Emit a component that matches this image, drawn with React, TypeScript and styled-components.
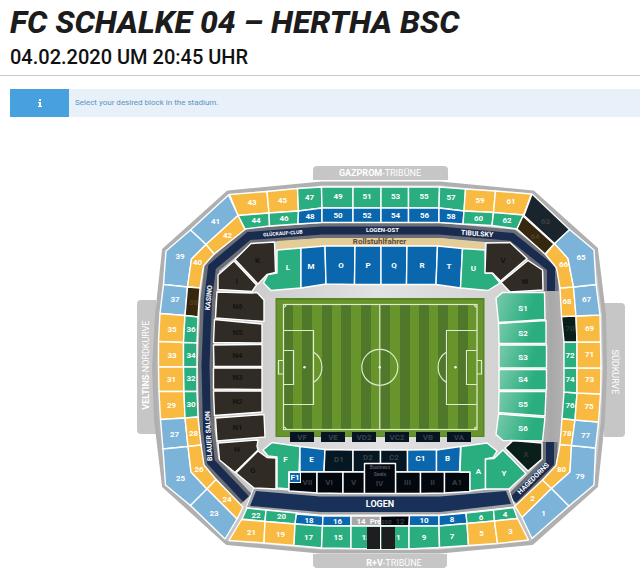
import React from "react";
import styled, { createGlobalStyle } from "styled-components";

const GlobalStyle = createGlobalStyle`
  *, *::before, *::after { box-sizing: border-box; }
  body {
    margin: 0;
    background: #fff;
    color: #1c1c1c;
    font-family: Roboto, "Liberation Sans", sans-serif;
  }
`;

const Header = styled.header`
  padding: 3px 10px 6px;
  border-bottom: 1px solid #c9c9c9;
`;

const Title = styled.h1`
  margin: 0;
  font-size: 32px;
  line-height: 38px;
  font-weight: 800;
  font-style: italic;
  white-space: nowrap;
`;

const Kickoff = styled.p`
  margin: 4px 0 0;
  color: #111;
  font-size: 20px;
  line-height: 24px;
  font-weight: 500;
  white-space: nowrap;
`;

const Notice = styled.div`
  display: flex;
  min-height: 28px;
  margin: 13px 0 0 10px;
  background: #e8f1f9;
`;

const NoticeIcon = styled.div`
  display: flex;
  align-items: center;
  justify-content: center;
  width: 59px;
  background: #48a1df;
`;

const NoticeText = styled.p`
  margin: 0;
  padding: 0 6px;
  align-self: center;
  color: #5d92bd;
  font-size: 8px;
  line-height: 12px;
`;

const Map = styled.svg`
  display: block;
  width: 100%;
  height: auto;
`;

type Tone =
  | "orange" | "sky" | "green" | "fade" | "blue" | "grey"
  | "dark" | "brown" | "night" | "ink" | "pine" | "black";

const fills: Record<Tone, string> = {
  orange: "#f8ba40",
  sky: "#7cb3d9",
  green: "#2aae80",
  fade: "url(#fade)",
  blue: "#0a67ad",
  grey: "#a8a8a8",
  dark: "#302c25",
  brown: "#35280f",
  night: "#19242c",
  ink: "#051722",
  pine: "#0a1f19",
  black: "#03080f",
};

const closedText: Partial<Record<Tone, string>> = {
  dark: "#151310",
  brown: "#504025",
  night: "#3b4045",
  ink: "#3a4248",
  pine: "#2c3834",
  black: "#3a3c40",
};

const Area = styled.polygon<{ $tone: Tone }>`
  fill: ${(p) => fills[p.$tone]};
  stroke: #fff;
  stroke-width: 1.4px;
  stroke-linejoin: round;
`;

const AreaLabel = styled.text<{ $tone?: Tone }>`
  fill: ${(p) => (p.$tone && closedText[p.$tone]) || "#fff"};
  font-size: 8px;
  font-weight: 700;
  text-anchor: middle;
`;

const BandLabel = styled.text<{ $color?: string; $size?: number }>`
  fill: ${(p) => p.$color ?? "#fff"};
  font-size: ${(p) => p.$size ?? 7}px;
  font-weight: 700;
  text-anchor: middle;
`;

const StandLabel = styled.text`
  fill: #fff;
  font-size: 9px;
  text-anchor: middle;
`;

const Strong = styled.tspan`
  font-weight: 700;
`;

const BlockLink = styled.a`
  cursor: pointer;
  &:hover polygon { opacity: 0.85; }
`;

type Block = [name: string, tone: Tone, x: number, y: number, points: string];

const blocks: Block[] = [
  ["43", "orange", 252, 205, "229.5,194.5 267,191.5 269,213 238,215.5"],
  ["45", "orange", 282.5, 203, "267,191.5 297.5,188.5 298.5,211 269,213"],
  ["44", "green", 256, 223, "238,215.5 269,213 269.5,226 245,229"],
  ["46", "green", 284, 221, "269,213 298.5,211 298,224 269.5,226"],
  ["47", "green", 309.5, 200, "297.5,188.5 321.5,187 322,208 298.5,211"],
  ["49", "green", 338, 199, "321.5,187 353,187 353,208 322,208"],
  ["51", "green", 367, 199, "353,187 381,187 381,208 353,208"],
  ["53", "green", 395.5, 199, "381,187 408.5,187 408.5,208 381,208"],
  ["55", "green", 424, 199, "408.5,187 439.5,187 439,208 408.5,208"],
  ["57", "green", 451, 200, "439.5,187 465.5,189 464,211 439,208"],
  ["59", "orange", 480, 203, "465.5,189 495.5,191 493.5,212.5 464,211"],
  ["61", "orange", 511, 204, "495.5,191 531.5,194 523.5,215 493.5,212.5"],
  ["48", "blue", 310, 219, "298.5,211 322,208 322,222.5 298,224"],
  ["50", "blue", 338, 218, "322,208 353,208 353,222.5 322,222.5"],
  ["52", "blue", 367, 218, "353,208 381,208 381,222.5 353,222.5"],
  ["54", "blue", 395.5, 218, "381,208 408.5,208 408.5,222.5 381,222.5"],
  ["56", "blue", 424.5, 218, "408.5,208 439,208 439,222.5 408.5,222.5"],
  ["58", "blue", 451, 219, "439,208 464,211 463,224 439,222.5"],
  ["60", "green", 478.5, 221, "464,211 493.5,212.5 492,225.5 463,224"],
  ["62", "green", 507, 223, "493.5,212.5 523.5,215 517,229 492,225.5"],
  ["41", "sky", 215.5, 224, "228.5,195 238,215.5 206,244.5 190.5,230"],
  ["42", "orange", 227.5, 238, "238,215.5 245,229.5 214,254 206,244.5"],
  ["39", "sky", 180, 259, "190.5,230 206,244.5 191.5,259 187.5,287 163.5,284.5 166,251"],
  ["40", "orange", 197.5, 265, "206,244.5 214,254 203.5,266 200,288 187.5,287 191.5,259"],
  ["37", "sky", 175, 302, "163.5,284.5 187.5,287 185,315.5 160,313.5"],
  ["38", "brown", 193.5, 305, "187.5,287 200,288 198,317 185,315.5"],
  ["35", "orange", 172, 332, "160,313.5 185,315.5 183.5,342.5 158.5,341.5"],
  ["36", "green", 191, 332, "185,315.5 198,317 197,343 183.5,342.5"],
  ["33", "orange", 172, 358, "158.5,341.5 183.5,342.5 183.5,367 158.5,367"],
  ["34", "green", 191, 358, "183.5,342.5 197,343 197,367 183.5,367"],
  ["31", "orange", 171.5, 382, "158.5,367 183.5,367 184,391.5 159,391.5"],
  ["32", "green", 191, 381, "183.5,367 197,367 197,391.5 184,391.5"],
  ["29", "orange", 171.5, 408, "159,391.5 184,391.5 185,418 160.5,419.5"],
  ["30", "green", 191, 407, "184,391.5 197,391.5 198,417 185,418"],
  ["27", "sky", 174.5, 437, "160.5,419.5 185,418 188,446.5 163,449"],
  ["28", "orange", 193.5, 436, "185,418 198,417 201,445 188,446.5"],
  ["25", "sky", 180.5, 481, "163,449 188,446.5 191,472 207,489 190.5,505.5 165.5,485"],
  ["26", "orange", 199, 472, "188,446.5 201,445 204,465 216,479.5 207,489 191,472"],
  ["24", "orange", 227, 502, "216,479.5 243,507 237,519 207,489"],
  ["23", "sky", 214, 516, "207,489 237,519 225,539 190.5,505.5"],
  ["22", "green", 256, 518, "247,508 266,510 265,521.5 242,519"],
  ["20", "green", 281.5, 519, "266,510 296.5,513 295,524 265,521.5"],
  ["21", "orange", 251.5, 535, "241.5,519.5 265,521.5 264,543 229,540.5"],
  ["19", "orange", 280.5, 537, "265,521.5 295,524 294,545.5 264,543"],
  ["18", "blue", 309, 523, "296.5,514 323,516 322.5,526 295,524"],
  ["16", "blue", 337.5, 524, "323,516 351,516 351,526 322.5,526"],
  ["17", "green", 308.5, 540, "295,524 322.5,526 321.5,548 294,545.5"],
  ["15", "green", 338, 540, "322.5,526 351,526 351,548.5 321.5,548"],
  ["14", "grey", 361, 524, "351,516 380.5,516 380.5,526 351,526"],
  ["13", "green", 366, 540, "351,526 380.5,526 380.5,549 351,548.5"],
  ["12", "black", 400, 524, "380.5,516 409.5,515.5 409,526 380.5,526"],
  ["11", "green", 396, 540, "380.5,526 409,526 409,549 380.5,549"],
  ["10", "blue", 424, 523, "409.5,515.5 439,515.5 439,526 409,526"],
  ["8", "blue", 452, 522, "439,515.5 466,513 467,523.5 439,526"],
  ["6", "green", 481, 520, "466,513 493.5,510 494.5,521 467,523.5"],
  ["4", "green", 505, 517, "493.5,510 513.5,507.5 517.5,518.5 494.5,521"],
  ["9", "green", 424, 540, "409,526 439,526 439.5,547.5 409,549"],
  ["7", "green", 452, 539, "439,526 467,523.5 468.5,545.5 439.5,547.5"],
  ["5", "orange", 481.5, 536, "467,523.5 494.5,521 497.5,543.5 468.5,545.5"],
  ["3", "orange", 510.5, 534, "494.5,521 517.5,518.5 528.5,540 497.5,543.5"],
  ["2", "orange", 532.5, 501, "515,506 542.5,480 551.5,488.5 522,517.5"],
  ["1", "sky", 543.5, 516, "522,517.5 551.5,488.5 569,506 532,538.5"],
  ["80", "orange", 561.5, 472, "542.5,480 556,465.5 560,444.5 571.5,445.5 570,472 551.5,488.5"],
  ["79", "sky", 580, 479, "571.5,445.5 595.5,448 594,485 569,506 551.5,488.5 570,472"],
  ["78", "orange", 567, 436, "562,418.5 575,420 571.5,445.5 560,444.5"],
  ["77", "sky", 585.5, 438, "575,420 598.5,422 595.5,448 571.5,445.5"],
  ["76", "green", 570, 408, "564,392 577,393 575,420 562,418.5"],
  ["75", "orange", 589, 409, "577,393 600.5,394 598.5,422 575,420"],
  ["74", "green", 570, 382, "564,368 577,368 577,393 564,392"],
  ["73", "orange", 589.5, 382, "577,368 601,368 600.5,394 577,393"],
  ["72", "green", 570, 358, "564,342 577,342 577,368 564,368"],
  ["71", "orange", 589.5, 357, "577,342 600.5,342 601,368 577,368"],
  ["70", "pine", 570, 331, "561.5,316.5 576,316 577,342 564,342"],
  ["69", "orange", 589.5, 331, "576,316 600,315 600.5,342 577,342"],
  ["68", "orange", 567, 304, "560,288 573.5,287 576,316 561.5,316.5"],
  ["67", "sky", 586.5, 302, "573.5,287 596,284.5 600,315 576,316"],
  ["66", "orange", 563.5, 267, "554.5,243.5 568,258.5 573.5,287 560,288 556.5,268 545.5,254.5"],
  ["65", "sky", 581, 260, "569.5,229.5 594,250 596,284.5 573.5,287 568,258.5 554.5,243.5"],
  ["63", "night", 545.5, 224, "532,194 569.5,229.5 554.5,243.5 524,215.5"],
  ["64", "brown", 535, 239, "523,216 554,244 545,254 517,229"],
  ["L", "green", 288, 270, "277,250 301,248 301,288 271,290.5 263.5,283 268,274.5 277,273"],
  ["M", "blue", 311, 269, "301,248 325,246 326,284 301,288"],
  ["O", "blue", 341, 268, "325,246 355,246 354.5,284.5 326,284"],
  ["P", "blue", 368, 268, "355,246 381,246 381,284.5 354.5,284.5"],
  ["Q", "blue", 394, 268, "381,246 407,246 406.5,284.5 381,284.5"],
  ["R", "blue", 422, 268, "407,246 437.5,246 436,284.5 406.5,284.5"],
  ["T", "blue", 449, 269, "437.5,246 462.5,248.5 460.5,288 436,284.5"],
  ["U", "green", 473.5, 271, "462.5,248.5 485,250 485.5,273 492,273 500,283 488,290.5 460.5,288"],
  ["K", "dark", 257.5, 263, "251,243.5 274.5,242 275.5,272.5 267,274.5 258,284 235,259.5"],
  ["I", "dark", 237, 284, "234,261 256.5,285 252,291.5 218,289.5 218,275"],
  ["N6", "dark", 237.5, 309, "217,292 252,293 257,292.5 264,300 264,321.5 215.5,318"],
  ["N5", "dark", 237.5, 335, "214.5,319.5 262,324 262,343 213.5,342.5"],
  ["N4", "dark", 237.5, 358, "213.5,345 262,344.5 262,366.5 214,366.5"],
  ["N3", "dark", 237.5, 380, "213.5,368 262,368 262,389.5 213.5,389"],
  ["N2", "dark", 237.5, 404, "213.5,391 262,391 262,412 214.5,415.5"],
  ["N1", "dark", 237.5, 430, "215.5,418 264,414.5 265,437 217,441"],
  ["H", "dark", 237, 452, "218,443 258,440 257,446 258,450 235,472.5 219.5,460"],
  ["G", "dark", 253, 473, "258,451 267,457.5 276,458 276,489 254,488 236,473"],
  ["F", "green", 285.5, 462, "272,442.5 300,446.5 299,472 289,472 289,489 277,488 277,457 268,456 263,450"],
  ["E", "blue", 311.5, 462, "300,446.5 325,449.5 324,472 300,472"],
  ["D1", "ink", 339, 462, "325,449.5 353,450 353,472 324,472"],
  ["D2", "ink", 368, 460, "353,450 380.5,450 380.5,472 353,472"],
  ["C2", "ink", 394, 460, "380.5,450 407.5,450 407.5,472 380.5,472"],
  ["C1", "blue", 420.5, 461, "407.5,450 436.5,449.5 436.5,472 407.5,472"],
  ["B", "blue", 447.5, 461, "436.5,450 460.5,446.5 459.5,472 436.5,472"],
  ["VII", "black", 307.5, 485, "289,472 317,472 317,493 289,491"],
  ["VI", "black", 329, 485, "317,472 343,472 343,493.5 317,493"],
  ["V", "black", 353.5, 485, "343,472 364.5,472 364.5,493.5 343,493.5"],
  ["III", "black", 407.5, 485, "395.5,472 420.5,472 420.5,493.5 395.5,493.5"],
  ["II", "black", 432.5, 485, "420.5,472 444.5,472 444.5,493 420.5,493.5"],
  ["A1", "black", 457, 485, "444.5,472 470,472 470,491.5 444.5,493"],
  ["IV", "black", 379.5, 486, "364.5,463.5 395.5,463.5 395.5,493.5 364.5,493.5"],
  ["A", "green", 478.5, 474, "461,446.5 487,443 497,451 493,457.5 485.5,459 485.5,489 470,491 470,472 460,472"],
  ["Y", "green", 504, 476, "485.5,459 494,458.5 503,450 526,473.5 509,489 485.5,489"],
  ["X", "pine", 526, 457, "513,440.5 542,443 542,459 528,471 505,448"],
  ["V", "dark", 503, 263, "486,243 510,242.5 527,258.5 500.5,281 492.5,273 485,273"],
  ["W", "dark", 525, 284, "528,260.5 542.5,270 543,290 510,292 501,282.5"],
  ["S1", "fade", 523, 311, "502.5,292.5 544.5,292.5 545,319.5 498.5,322.5 496,298"],
  ["S2", "fade", 523, 336, "498.5,323.5 546,320.5 546,343.5 499,343.5"],
  ["S3", "fade", 523, 360, "499,345 546.5,345 546.5,368 499,368"],
  ["S4", "fade", 523, 382, "499,369.5 546.5,369.5 546.5,390 499,390"],
  ["S5", "fade", 523, 407, "499,391.5 546,391.5 545,416 498.5,412.5"],
  ["S6", "fade", 523, 431, "498.5,414 545,417.5 542.5,441 503,440.5 496,434.5"],
];

const stripes = [283, 302, 322, 341, 361, 380, 400, 419, 438, 458];

const boxes: [string, number][] = [
  ["VF", 290], ["VE", 321], ["VD2", 352], ["VC2", 385], ["VB", 416], ["VA", 447],
];

function BlockArea({ block }: { block: Block }) {
  const [name, tone, x, y, points] = block;
  const content = (
    <>
      <Area $tone={tone} points={points} />
      <AreaLabel $tone={tone} x={x} y={y}>{name}</AreaLabel>
    </>
  );
  return tone in closedText ? <g>{content}</g> : <BlockLink href={`#block-${name}`}>{content}</BlockLink>;
}

function Stands() {
  return (
    <g>
      <path d="M313 180V170a4 4 0 0 1 4-4H444a4 4 0 0 1 4 4V180z" fill="#c6c6c6" />
      <path d="M313 554H447V564a4 4 0 0 1-4 4H317a4 4 0 0 1-4-4z" fill="#c6c6c6" />
      <path d="M156 300H141a4 4 0 0 0-4 4V430a4 4 0 0 0 4 4H156z" fill="#c6c6c6" />
      <path d="M604 303H621a4 4 0 0 1 4 4V433a4 4 0 0 1-4 4H604z" fill="#c6c6c6" />
      <StandLabel x="380" y="176"><Strong>GAZPROM</Strong>-TRIBÜNE</StandLabel>
      <StandLabel x="394" y="566"><Strong>R+V</Strong>-TRIBÜNE</StandLabel>
      <StandLabel transform="translate(149 365) rotate(-90)"><Strong>VELTINS</Strong>-NORDKURVE</StandLabel>
      <StandLabel transform="translate(612 372) rotate(90)">SÜDKURVE</StandLabel>
    </g>
  );
}

function Pitch() {
  return (
    <g>
      <rect x="275.5" y="298" width="209" height="139" fill="#568526" />
      <rect x="277" y="300" width="206" height="136" fill="#68942c" />
      {stripes.map((x) => (
        <rect key={x} x={x} y="304" width="10" height="126" fill="#4f782b" />
      ))}
      <g fill="none" stroke="#dfeccb" strokeWidth="1.2">
        <rect x="283.5" y="304.5" width="193.5" height="125" />
        <path d="M379.8 304.5V429.5" />
        <circle cx="379.8" cy="367.3" r="18" />
        <path d="M283.5 330.5H313.5V404.5H283.5M283.5 350.5H293.5V384.5H283.5M283.5 360.5H278.5V374H283.5M313.5 352a18 18 0 0 1 0 30.5" />
        <path d="M477 330.5H446.5V404.5H477M477 350.5H466.5V384.5H477M477 360.5H481.5V374H477M446.5 352a18 18 0 0 0 0 30.5" />
        <path d="M283.5 307a2.500 2.500 0 0 0 2.500-2.500M474.5 304.5a2.500 2.500 0 0 0 2.500 2.500M283.5 427a2.500 2.500 0 0 1 2.500 2.500M474.5 429.5a2.500 2.500 0 0 1 2.500-2.500" />
      </g>
      <g fill="#fff">
        <circle cx="304.5" cy="367.3" r="1.2" />
        <circle cx="379.8" cy="367.3" r="1.2" />
        <circle cx="455.5" cy="367.3" r="1.2" />
      </g>
    </g>
  );
}

function Lounges() {
  const west = "M246 499L211 462L207 430L205.500 365L208 300L212 267L249 236L322 230.500H440L512 237L551 268V291";
  const east = "M550 442V463L513 500";
  return (
    <g>
      <g fill="none" stroke="#6c6f76" strokeWidth="15"><path d={west} /><path d={east} /></g>
      <g fill="none" stroke="#192c50" strokeWidth="8"><path d={west} /><path d={east} /></g>
      <polygon points="277,241 322,238 440,238 484,243 484,250 440,245.5 322,245.5 277,250" fill="#e5cd97" />
      <polygon points="254,487 320,493 440,493 508,487 515,507 440,515 320,515 246,508" fill="#a2a4a8" stroke="#fff" />
      <polygon points="256,491 320,496.5 440,496.5 506,491 511,504 440,512 320,512 250,506" fill="#193158" />
    </g>
  );
}

function Labels() {
  return (
    <g>
      <BandLabel $size={5} transform="translate(283 235) rotate(-4)">GLÜCKAUF-CLUB</BandLabel>
      <BandLabel $size={6} x="382.5" y="232">LOGEN-OST</BandLabel>
      <BandLabel transform="translate(477 236) rotate(4)">TIBULSKY</BandLabel>
      <BandLabel $color="#5c4a3c" x="379.5" y="244" $size={8}>Rollstuhlfahrer</BandLabel>
      <BandLabel transform="translate(211 298) rotate(-84)">KASINO</BandLabel>
      <BandLabel transform="translate(211 436) rotate(-93)">BLAUER SALON</BandLabel>
      <BandLabel transform="translate(535 480) rotate(-45)">HAGEDORNS</BandLabel>
      <BandLabel $size={9} x="380" y="507">LOGEN</BandLabel>
    </g>
  );
}

function PressArea() {
  return (
    <g>
      <rect x="367" y="527" width="13" height="22" fill="#1d1e20" />
      <rect x="381.5" y="527" width="13.5" height="22" fill="#1d1e20" />
      <BandLabel x="381" y="524">
        Pre<tspan fill="#3a3a3c">sse</tspan>
      </BandLabel>
    </g>
  );
}

function StadiumMap() {
  return (
    <Map viewBox="0 117 640 464" role="group" aria-label="Stadium blocks">
      <defs>
        <linearGradient id="fade" x1="0" y1="0.2" x2="1" y2="0.4">
          <stop offset="0" stopColor="#78c9ac" />
          <stop offset="0.75" stopColor="#2aae80" />
        </linearGradient>
        <linearGradient id="floor" x1="0" x2="1">
          <stop offset="0" stopColor="#b4b4b4" />
          <stop offset="0.25" stopColor="#cfcfcf" />
          <stop offset="0.5" stopColor="#e2e2e2" />
          <stop offset="0.78" stopColor="#d2d2d2" />
          <stop offset="0.88" stopColor="#a8a8a8" />
          <stop offset="1" stopColor="#d2d2d2" />
        </linearGradient>
      </defs>
      <Stands />
      <polygon
        points="228,192.5 322,183.5 440,183.5 533,192.5 596,249 604,315 605,368 603,420 596,486 532,543 440,551.5 320,551.5 227,543 164,486 156,420 154,368 157,315 164,250"
        fill="url(#floor)"
        stroke="#b0b0b0"
        strokeWidth="4"
        strokeLinejoin="round"
      />
      <Lounges />
      <Pitch />
      {blocks.map((block) => (
        <BlockArea key={block[0] + block[4]} block={block} />
      ))}
      <PressArea />
      <BlockLink href="#block-F1">
        <rect x="289.5" y="472.5" width="11" height="10" fill="#0a67ad" stroke="#fff" />
        <AreaLabel x="295" y="480">F1</AreaLabel>
      </BlockLink>
      <BandLabel $size={5} $color="#54555a" x="380" y="469">Business</BandLabel>
      <BandLabel $size={5} $color="#54555a" x="380" y="476">Seats</BandLabel>
      {boxes.map(([name, x]) => (
        <g key={name}>
          <rect x={x} y="432" width="24" height="10" fill="#061521" />
          <AreaLabel $tone="ink" x={x + 12} y="440">{name}</AreaLabel>
        </g>
      ))}
      <Labels />
    </Map>
  );
}

export default function App() {
  return (
    <>
      <GlobalStyle />
      <Header>
        <Title>FC SCHALKE 04 – HERTHA BSC</Title>
        <Kickoff>04.02.2020 UM 20:45 UHR</Kickoff>
      </Header>
      <main>
        <Notice role="status">
          <NoticeIcon>
            <svg width="4" height="8" viewBox="0 0 4 8" fill="#fff" aria-hidden="true">
              <rect x="1" width="2" height="2" />
              <path d="M0 3h3v4h1v1H0V7h1V4H0z" />
            </svg>
          </NoticeIcon>
          <NoticeText>Select your desired block in the stadium.</NoticeText>
        </Notice>
        <StadiumMap />
      </main>
    </>
  );
}
